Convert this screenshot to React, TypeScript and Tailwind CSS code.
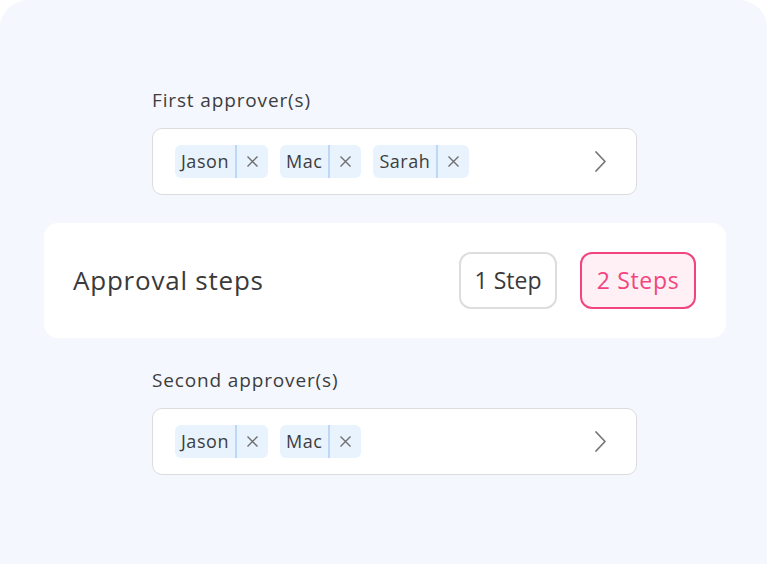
const Chip = ({ name }: { name: string }) => (
  <div className="flex h-[33px] items-center rounded-md bg-[#e8f3fe]">
    <span className="pl-[6px] pr-[6px] text-[18px] tracking-[0.03em] text-[#3d3d3d]">{name}</span>
    <span className="h-full w-[2px] bg-[#bcd8f6]" />
    <span className="flex w-[31px] items-center justify-center">
      <svg width="13" height="13" viewBox="0 0 13 13" fill="none" stroke="#6f6f6f" strokeWidth="1.4">
        <path d="M1.5 1.5l10 10M11.5 1.5l-10 10" />
      </svg>
    </span>
  </div>
);

const ApproverField = ({ label, names }: { label: string; names: string[] }) => (
  <div className="ml-[152px] w-[485px]">
    <div className="h-[24px] text-[19px] leading-[24px] tracking-[0.045em] text-[#3d3d3d]">{label}</div>
    <div className="mt-[16px] flex h-[67px] items-center rounded-[10px] border border-[#dcdcdc] bg-white pl-[22px] pr-[29px]">
      <div className="flex flex-1 gap-[12px]">
        {names.map((n) => (
          <Chip key={n} name={n} />
        ))}
      </div>
      <svg width="13" height="23" viewBox="0 0 13 23" fill="none" stroke="#777" strokeWidth="1.8" strokeLinecap="round" strokeLinejoin="round">
        <path d="M2 2l9 9.5L2 21" />
      </svg>
    </div>
  </div>
);

export default function App() {
  return (
    <div className="h-[564px] bg-white font-['Open_Sans',sans-serif]">
      <div className="h-[564px] w-[767px] rounded-t-[28px] bg-[#f4f7fe] pt-[88px]">
        <ApproverField label="First approver(s)" names={["Jason", "Mac", "Sarah"]} />
        <div className="ml-[44px] mt-[28px] flex h-[115px] w-[682px] items-center rounded-[14px] bg-white pl-[29px] pr-[30px]">
          <div className="flex-1 text-[26px] tracking-[0.03em] text-[#3a3a3a]">Approval steps</div>
          <div className="flex gap-[23px]">
            <button className="h-[57px] w-[98px] rounded-[12px] border-2 border-[#dddddd] bg-white text-[23px] text-[#3a3a3a]">
              1 Step
            </button>
            <button className="h-[57px] w-[116px] rounded-[12px] border-2 border-[#f2457f] bg-[#fff0f5] text-[23px] tracking-[0.03em] text-[#f2457f]">
              2 Steps
            </button>
          </div>
        </div>
        <div className="mt-[30px]">
          <ApproverField label="Second approver(s)" names={["Jason", "Mac"]} />
        </div>
      </div>
    </div>
  );
}
